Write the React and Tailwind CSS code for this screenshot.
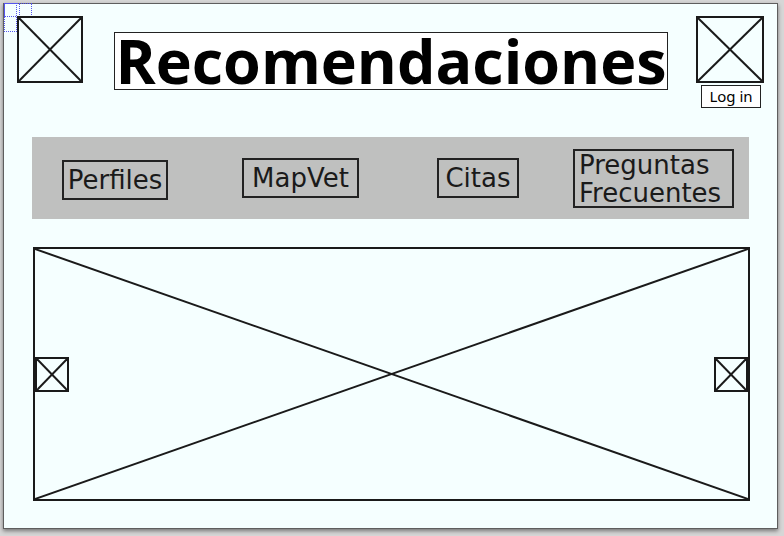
import React from 'react';

const Placeholder = ({ className = '' }) => (
  <div className={`relative border-2 border-[#1a1a1a] ${className}`}>
    <svg className="absolute inset-0 w-full h-full" preserveAspectRatio="none" viewBox="0 0 100 100">
      <line x1="0" y1="0" x2="100" y2="100" stroke="#1a1a1a" strokeWidth="2" vectorEffect="non-scaling-stroke" />
      <line x1="100" y1="0" x2="0" y2="100" stroke="#1a1a1a" strokeWidth="2" vectorEffect="non-scaling-stroke" />
    </svg>
  </div>
);

const NavItem = ({ children, className = '' }) => (
  <div
    className={`border-2 border-[#222] text-[26px] text-[#1a1a1a] ${className}`}
    style={{ fontFamily: '"DejaVu Sans", sans-serif' }}
  >
    {children}
  </div>
);

export default function App() {
  return (
    <div className="w-[784px] h-[536px] bg-[#d6d6d6] pt-[3px] pl-[3px] overflow-hidden">
      <div className="w-[775px] h-[526px] border border-[#5e5e5e] bg-[#f5ffff] shadow-[0_2px_4px_rgba(0,0,0,0.45)] relative">
        <div className="absolute left-0 top-[-1px] w-[28px] h-[14px] border border-dotted border-[#5555ee]" />
        <div className="absolute left-0 top-[-1px] w-[13px] h-[29px] border border-dotted border-[#5555ee]" />
        <div className="absolute left-[15px] top-[-1px] w-0 h-[14px] border-l border-dotted border-[#5555ee]" />
        <div className="flex items-start pl-[13px] pt-[12px]">
          <Placeholder className="w-[66px] h-[67px]" />
          <div
            className="ml-[31px] mt-[16px] w-[554px] h-[58px] border border-[#222] bg-white flex items-center justify-center text-[61px] leading-[58px] font-bold text-black"
            style={{ fontFamily: '"Open Sans", sans-serif' }}
          >
            Recomendaciones
          </div>
          <div className="ml-[28px] flex flex-col items-center w-[68px]">
            <Placeholder className="w-[68px] h-[67px]" />
            <div
              className="mt-[2px] ml-[2px] w-[60px] h-[23px] border border-[#222] bg-white text-center text-[15px] leading-[20px] text-black"
              style={{ fontFamily: '"Noto Sans", sans-serif' }}
            >
              Log in
            </div>
          </div>
        </div>
        <div className="ml-[28px] mt-[29px] w-[717px] h-[82px] bg-[#bfc0bf] flex items-center pl-[30px]">
          <NavItem className="mt-[4px] w-[106px] h-[40px] leading-[36px] text-center">Perfiles</NavItem>
          <NavItem className="ml-[74px] w-[117px] h-[40px] leading-[36px] text-center">MapVet</NavItem>
          <NavItem className="ml-[78px] w-[82px] h-[40px] leading-[36px] text-center">Citas</NavItem>
          <NavItem className="ml-[54px] mt-[1px] w-[161px] h-[59px] leading-[28px] pl-[4px]">
            Preguntas
            <br />
            Frecuentes
          </NavItem>
        </div>
        <div className="ml-[29px] mt-[28px] w-[717px] h-[254px] relative border-2 border-[#1a1a1a]">
          <svg className="absolute inset-0 w-full h-full" preserveAspectRatio="none" viewBox="0 0 100 100">
            <line x1="0" y1="0" x2="100" y2="100" stroke="#1a1a1a" strokeWidth="2" vectorEffect="non-scaling-stroke" />
            <line x1="100" y1="0" x2="0" y2="100" stroke="#1a1a1a" strokeWidth="2" vectorEffect="non-scaling-stroke" />
          </svg>
          <div className="relative h-full flex items-center justify-between">
            <Placeholder className="w-[34px] h-[35px] bg-[#f5ffff]" />
            <Placeholder className="w-[34px] h-[35px] bg-[#f5ffff]" />
          </div>
        </div>
      </div>
    </div>
  );
}
